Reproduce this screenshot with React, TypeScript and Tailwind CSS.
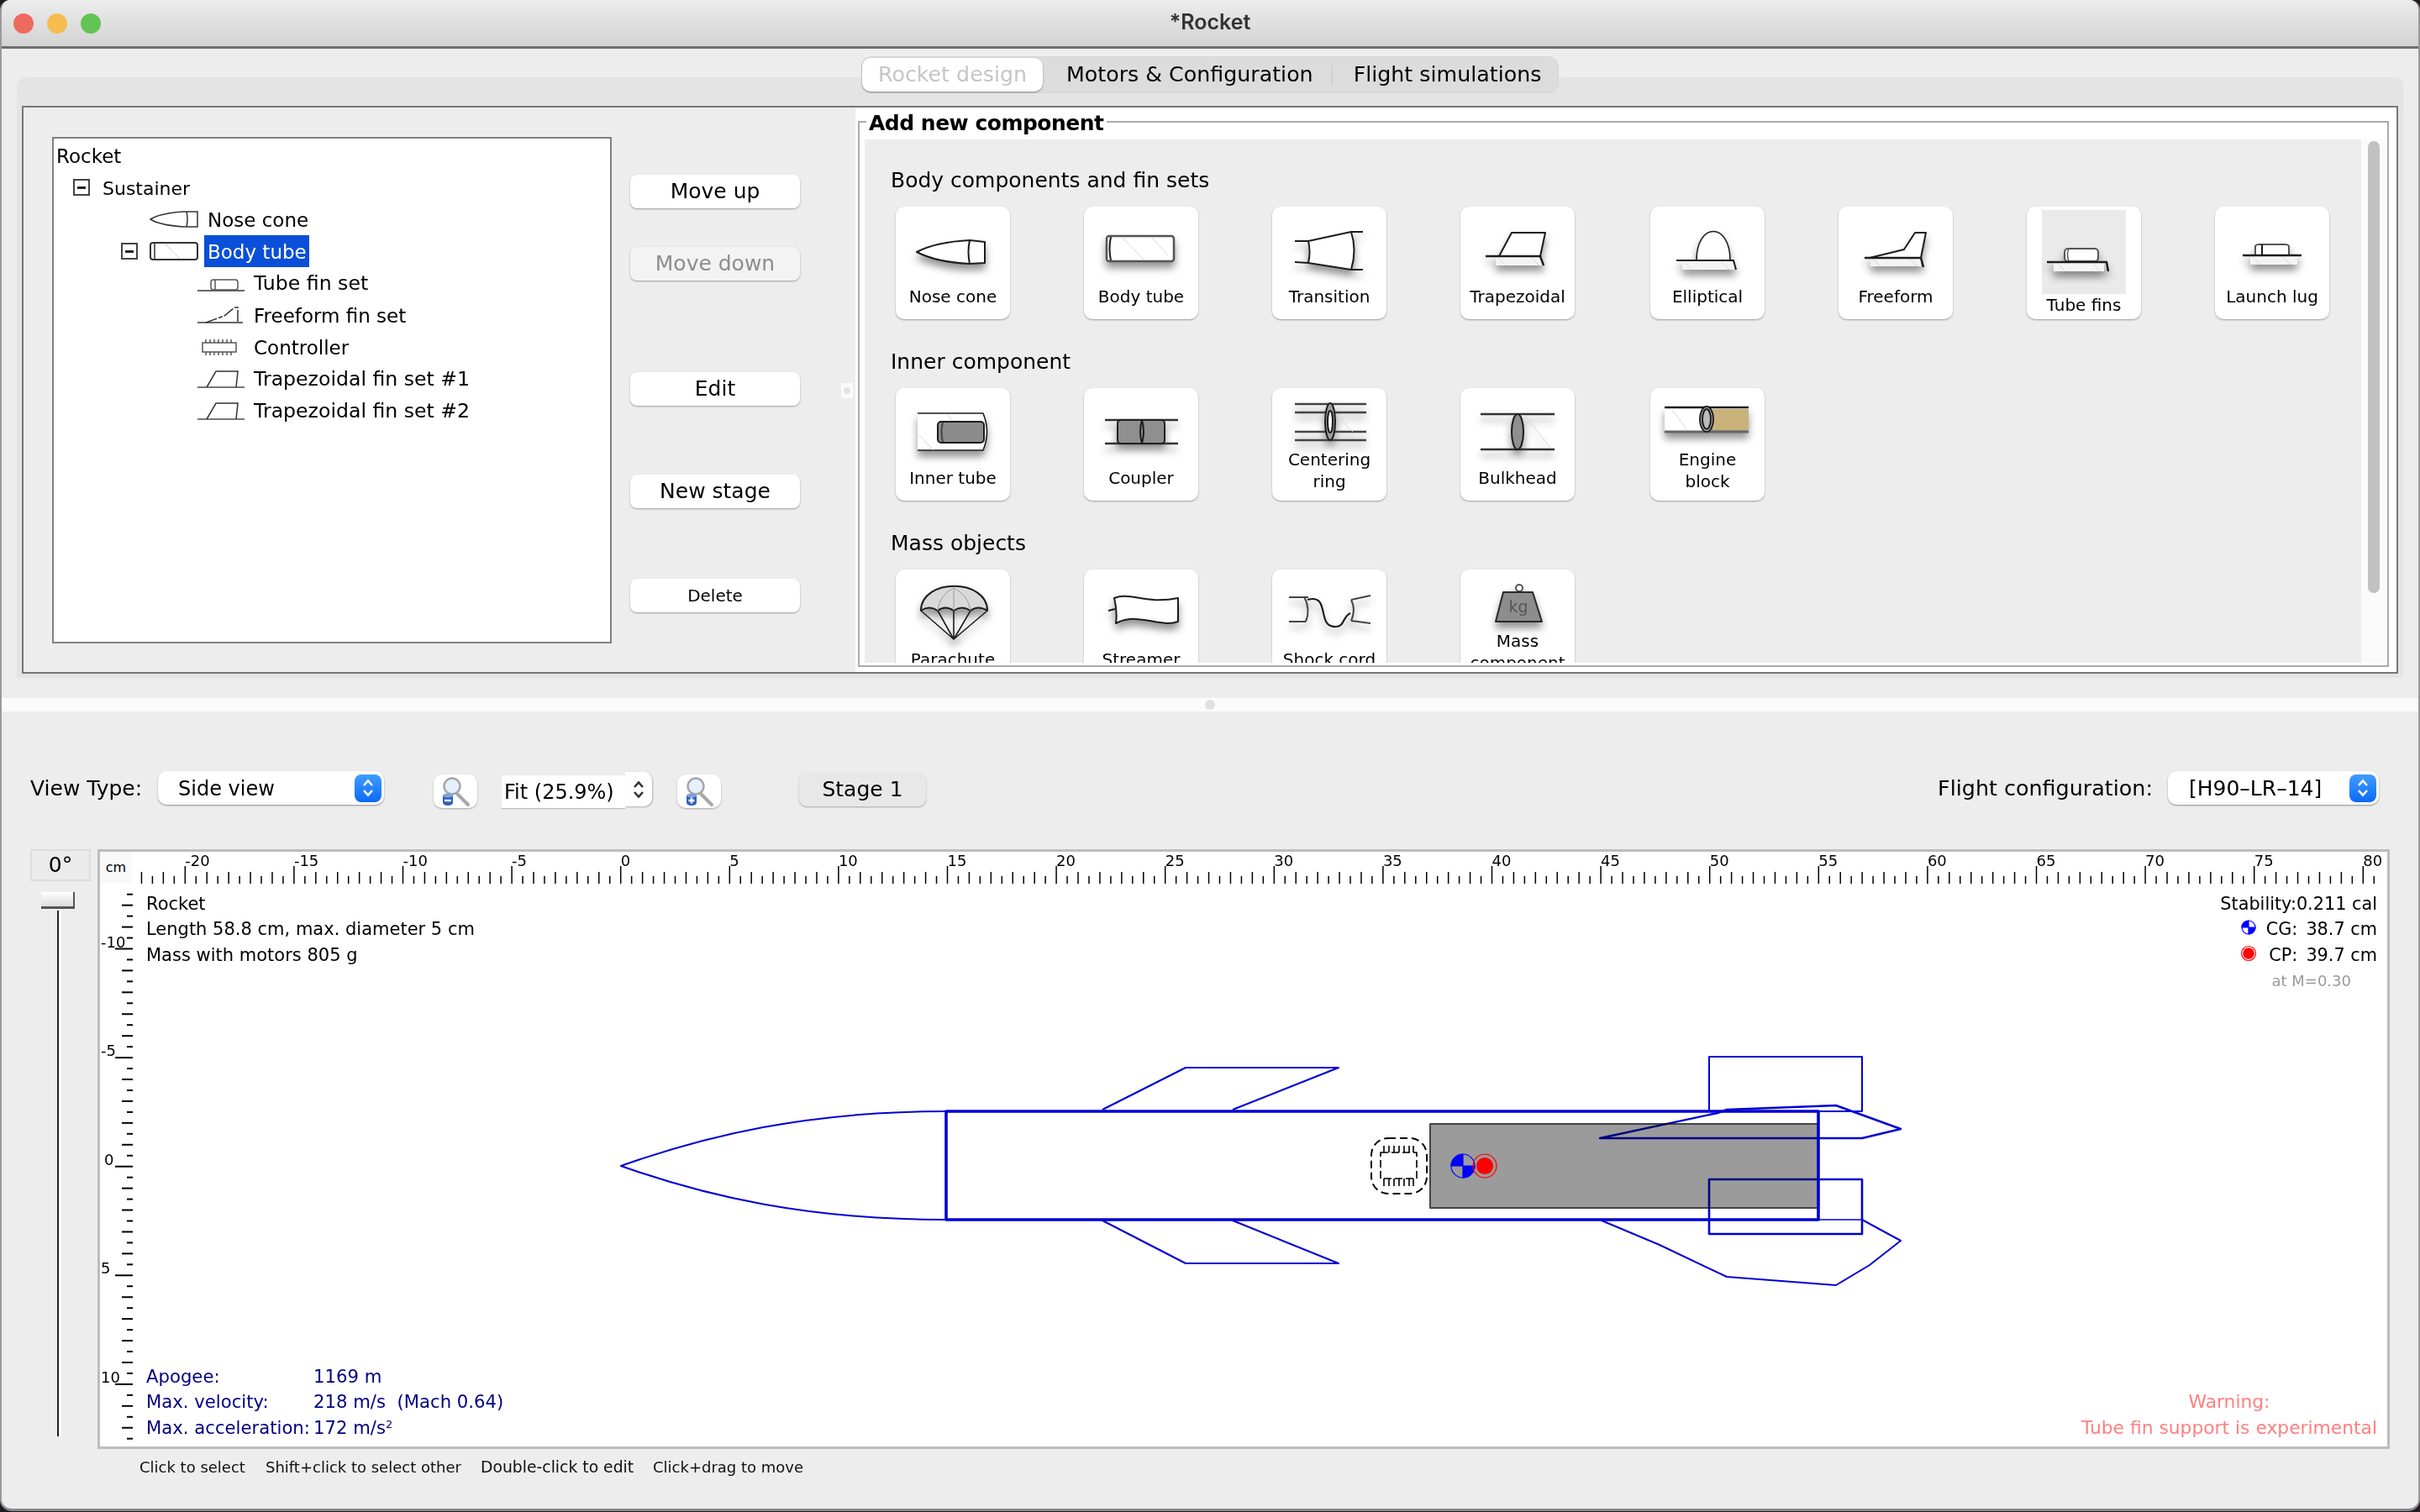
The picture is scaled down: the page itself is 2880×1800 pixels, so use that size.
import type { ReactNode } from "react";

const OUTLINE = "#1c1c1c";

// soft drop shadow under the palette drawings
function Art({ h = 92, children }: { h?: number; children: ReactNode }) {
  return (
    <svg width={136} height={h} viewBox={`0 0 136 ${h}`} className="shrink-0 [filter:drop-shadow(0_7px_5px_rgba(0,0,0,0.42))]">
      <g fill="none" stroke={OUTLINE} strokeWidth={2} strokeLinejoin="round">
        {children}
      </g>
    </svg>
  );
}

const Diagonal = ({ d }: { d: string }) => <path d={d} stroke="#d8d8d8" strokeWidth={1} />;

const icons: Record<string, ReactNode> = {
  nose: (
    <Art>
      <path d="M25 54 Q48 42 88 40 L106 42 V67 L88 68 Q48 66 25 54 Z" fill="#fff" />
      <path d="M88 40 Q85 54 88 68" />
    </Art>
  ),
  body: (
    <Art>
      <rect x={27} y={35} width={80} height={30} rx={3} fill="#fff" stroke="#555" strokeWidth={2.5} />
      <path d="M32 36 Q29 50 32 64" />
      <Diagonal d="M45 36 L72 64 M80 36 L100 58" />
    </Art>
  ),
  transition: (
    <Art>
      <path d="M43 41 L94 30 Q101 52 94 75 L43 67 Z" fill="#fff" stroke="none" />
      <path d="M27 41 H43 L94 30 H108 M27 66 L43 67 L94 75 H108" />
      <path d="M43 41 Q46 54 43 67 M94 30 Q101 52 94 75" />
    </Art>
  ),
  trapezoidal: (
    <Art>
      <path d="M46 59 L61 31 H101 L95 59 Z" fill="#fff" />
      <rect x={42} y={60} width={56} height={10} fill="#f4f4f4" stroke="none" />
      <Diagonal d="M44 60 L54 70 M84 60 L94 70" />
      <path d="M30 59 H95 L99 70" strokeWidth={2.5} />
    </Art>
  ),
  elliptical: (
    <Art>
      <path d="M55 64 C55 18 95 18 95 64 Z" fill="#fff" strokeWidth={1.6} />
      <rect x={38} y={65} width={62} height={10} fill="#f4f4f4" stroke="none" />
      <Diagonal d="M40 65 L50 75 M84 65 L94 75" />
      <path d="M31 64 H99 L102 75" strokeWidth={2} />
    </Art>
  ),
  freeform: (
    <Art>
      <path d="M37 61 L78 51 L91 31 H104 L98 61 Z" fill="#fff" />
      <rect x={38} y={62} width={60} height={9} fill="#f4f4f4" stroke="none" />
      <Diagonal d="M40 62 L50 71 M84 62 L94 71" />
      <path d="M31 61 H98 L101 72" strokeWidth={2.5} />
    </Art>
  ),
  tubefins: (
    <div className="relative mt-[4px] h-[100px] w-[100px] shrink-0 bg-[#ebeaea]">
      <svg width={100} height={100} viewBox="18 4 100 100" className="[filter:drop-shadow(0_7px_5px_rgba(0,0,0,0.42))]">
        <g fill="none" stroke={OUTLINE} strokeWidth={2} strokeLinejoin="round">
          <rect x={45} y={50} width={40} height={15} rx={4} fill="#fff" stroke="#555" />
          <path d="M50 50 Q47 57 50 65" stroke="#555" strokeWidth={1.4} />
          <rect x={32} y={67} width={60} height={10} fill="#f4f4f4" stroke="none" />
          <Diagonal d="M36 67 L46 77 M78 67 L88 77" />
          <path d="M24 66 H95 L97 77" strokeWidth={2.5} />
        </g>
      </svg>
    </div>
  ),
  lug: (
    <Art>
      <path d="M48 58 V47 Q49 45 52 45 H84 Q87 45 88 47 V58" fill="#fff" stroke="#555" />
      <path d="M56 45 V58" />
      <rect x={42} y={59} width={56} height={10} fill="#f4f4f4" stroke="none" />
      <Diagonal d="M44 59 L54 69 M80 59 L90 69" />
      <path d="M33 58 H103" strokeWidth={2.5} />
    </Art>
  ),
  inner: (
    <Art>
      <path d="M26 30 H104 Q113 52 104 74 H26" fill="#fff" strokeWidth={1.6} />
      <Diagonal d="M60 31 L90 60 M27 55 L45 74" />
      <rect x={50} y={40} width={55} height={25} rx={4} fill="#8b8b8b" />
      <path d="M56 41 Q53 52 56 64" stroke="#444" />
    </Art>
  ),
  coupler: (
    <Art>
      <path d="M25 38 H112 M25 66 H112" stroke="#333" strokeWidth={2.5} />
      <rect x={40} y={38} width={56} height={28} rx={4} fill="#8f8f8f" stroke="#222" />
      <path d="M69 38 Q65 52 69 66 M69 38 Q73 52 69 66" />
    </Art>
  ),
  ring: (
    <Art h={72}>
      <path d="M27 19 H112 M27 29 H112 M27 52 H112 M27 62 H112" stroke="#444" strokeWidth={2.5} />
      <Diagonal d="M74 30 L96 52" />
      <ellipse cx={69} cy={40} rx={6} ry={22} fill="#9c9c9c" />
      <ellipse cx={69} cy={40} rx={3} ry={13} fill="#fff" />
    </Art>
  ),
  bulkhead: (
    <Art>
      <path d="M24 31 H112 M24 73 H112" stroke="#333" strokeWidth={2.5} />
      <Diagonal d="M76 32 L108 72" />
      <ellipse cx={68} cy={52} rx={7} ry={21} fill="#8f8f8f" />
    </Art>
  ),
  engine: (
    <Art h={72}>
      <rect x={74} y={25} width={43} height={25} fill="#c9b27a" stroke="none" />
      <rect x={17} y={24} width={55} height={27} fill="#fff" stroke="none" />
      <path d="M17 23 H117" strokeWidth={2.5} />
      <path d="M17 52 H117" stroke="#666" strokeWidth={3} />
      <Diagonal d="M26 26 L44 50" />
      <ellipse cx={67} cy={37} rx={8} ry={15} fill="#bbb" />
      <ellipse cx={67} cy={37} rx={5} ry={12} />
    </Art>
  ),
  parachute: (
    <Art>
      <path d="M30 49 C30 10 109 10 109 49 Q98 42 89 49 Q79 42 69 49 Q59 42 50 49 Q40 42 30 49 Z" fill="#d9d9d9" />
      <path d="M30 49 L69 83 L109 49 M50 49 L69 83 L89 49 M69 49 V83" strokeWidth={1.6} />
      <path d="M50 49 Q52 30 69 22 Q86 30 89 49 M69 22 V49" stroke="#999" strokeWidth={1} />
    </Art>
  ),
  streamer: (
    <Art>
      <path d="M36 34 C55 26 72 42 112 34 V62 C90 70 66 50 38 64 Q40 50 36 34 Z" fill="#fff" />
      <path d="M29 49 L37 47" />
    </Art>
  ),
  shock: (
    <Art>
      <path d="M20 33 H36 L43 33 M20 62 H40" stroke="#444" />
      <path d="M38 32 Q46 48 40 62" stroke="#444" />
      <path d="M42 36 C70 28 52 70 76 68 C86 68 84 56 93 52" strokeWidth={2.2} />
      <path d="M94 36 L117 31 M94 61 L117 64 M94 36 Q100 48 94 61" stroke="#444" />
    </Art>
  ),
  mass: (
    <Art h={72}>
      <circle cx={70} cy={22} r={4} fill="#fff" stroke="#555" />
      <path d="M51 27 H86 L97 62 H42 Z" fill="#8d8d8d" stroke="#2a2a2a" />
      <text x={69} y={51} textAnchor="middle" fontSize={19} fill="#555" stroke="none">kg</text>
    </Art>
  ),
};

const palette = [
  {
    title: "Body components and fin sets",
    items: [
      ["Nose cone", "nose"],
      ["Body tube", "body"],
      ["Transition", "transition"],
      ["Trapezoidal", "trapezoidal"],
      ["Elliptical", "elliptical"],
      ["Freeform", "freeform"],
      ["Tube fins", "tubefins"],
      ["Launch lug", "lug"],
    ],
  },
  {
    title: "Inner component",
    items: [
      ["Inner tube", "inner"],
      ["Coupler", "coupler"],
      ["Centering ring", "ring"],
      ["Bulkhead", "bulkhead"],
      ["Engine block", "engine"],
    ],
  },
  {
    title: "Mass objects",
    items: [
      ["Parachute", "parachute"],
      ["Streamer", "streamer"],
      ["Shock cord", "shock"],
      ["Mass component", "mass"],
    ],
  },
];

function PaletteCard({ label, icon }: { label: string; icon: string }) {
  const twoLines = icon === "ring" || icon === "engine" || icon === "mass";
  const [first, second] = label.split(" ");
  return (
    <div className="flex h-[134px] w-[136px] flex-col items-center overflow-hidden rounded-[10px] bg-white shadow-[0_1px_2px_rgba(0,0,0,0.35)]">
      {icons[icon]}
      {twoLines ? (
        <div className="text-center text-[20px] leading-[26px] text-black">
          <div>{first}</div>
          <div>{second}</div>
        </div>
      ) : (
        <div className={`text-center text-[20px] leading-[26px] text-black ${icon === "tubefins" ? "" : "mt-[2px]"}`}>{label}</div>
      )}
    </div>
  );
}

// small tree icons, same shapes as the palette ones
const treeIcons: Record<string, ReactNode> = {
  nose: <path d="M1 12 Q12 5 40 3 L57 3 V21 H40 Q12 19 1 12 Z M44 3 Q46 12 44 21" />,
  body: <><rect x={1} y={2} width={56} height={20} rx={3} strokeWidth={2} /><path d="M6 3 V21" /><path d="M18 3 L36 21" stroke="#ccc" strokeWidth={1} /></>,
  tube: <><path d="M0 21 H56" /><rect x={16} y={8} width={32} height={12} rx={3} stroke="#555" /><path d="M21 8 V20" stroke="#555" /></>,
  freeform: <><path d="M0 21 H54" /><path d="M10 21 L32 13 L44 3 H48 V21" strokeDasharray="14 2 5 2" /></>,
  controller: <><rect x={6} y={7} width={40} height={11} stroke="#555" /><path d="M10 3 V7 M15 3 V7 M20 3 V7 M25 3 V7 M30 3 V7 M35 3 V7 M40 3 V7 M10 18 V22 M15 18 V22 M20 18 V22 M25 18 V22 M30 18 V22 M35 18 V22 M40 18 V22" stroke="#555" /></>,
  trap: <><path d="M0 22 H56" strokeWidth={2} stroke="#777" /><path d="M11 22 L22 3 H48 L46 22" /></>,
};

function TreeIcon({ name }: { name: string }) {
  return (
    <svg width={58} height={24} viewBox="0 0 58 24" className="shrink-0">
      <g fill="none" stroke="#333" strokeWidth={1.5}>{treeIcons[name]}</g>
    </svg>
  );
}

function Collapse() {
  return (
    <span className="flex h-[20px] w-[20px] shrink-0 items-center justify-center border-2 border-[#444] bg-white">
      <span className="h-[3px] w-[10px] bg-[#222]" />
    </span>
  );
}

function RocketTree() {
  return (
    <div className="ml-[34px] mt-[35px] h-[603px] w-[666px] border-2 border-[#808080] bg-white pt-[1px] text-[23px] text-black">
      <div className="flex h-[38px] items-center pl-[3px] pt-[2px]">Rocket</div>
      <div className="flex h-[38px] items-center pl-[23px]">
        <Collapse />
        <span className="ml-[15px] pt-[2px] text-[22px]">Sustainer</span>
      </div>
      <div className="flex h-[38px] items-center pl-[114px]">
        <TreeIcon name="nose" />
        <span className="ml-[11px] pt-[2px]">Nose cone</span>
      </div>
      <div className="flex h-[38px] items-center pl-[80px]">
        <Collapse />
        <span className="ml-[14px]"><TreeIcon name="body" /></span>
        <span className="ml-[7px] flex h-[38px] w-[125px] items-center bg-[#0a4fd8] pl-[4px] pt-[2px] text-white">Body tube</span>
      </div>
      {[
        ["tube", "Tube fin set", "text-[23.6px]"],
        ["freeform", "Freeform fin set", "text-[23px]"],
        ["controller", "Controller", "text-[23px]"],
        ["trap", "Trapezoidal fin set #1", "text-[23.6px]"],
        ["trap", "Trapezoidal fin set #2", "text-[23.6px]"],
      ].map(([icon, label, size]) => (
        <div key={label} className="flex h-[38px] items-center pl-[171px]">
          <TreeIcon name={icon} />
          <span className={`ml-[9px] pt-[2px] ${size}`}>{label}</span>
        </div>
      ))}
    </div>
  );
}

function PushButton({ label, top, small, off }: { label: string; top: number; small?: boolean; off?: boolean }) {
  return (
    <div
      style={{ marginTop: top }}
      className={`flex h-[40px] w-[202px] items-center justify-center rounded-[8px] shadow-[0_1px_2px_rgba(0,0,0,0.35)] ${off ? "bg-[#f3f3f3] text-[#8d8d8d]" : "bg-white text-black"} ${small ? "text-[20px]" : "text-[25px]"}`}
    >
      {label}
    </div>
  );
}

function Chevrons({ color = "#fff" }: { color?: string }) {
  return (
    <svg width={16} height={24} viewBox="0 0 16 24" fill="none" stroke={color} strokeWidth={2.6}>
      <path d="M3 9 L8 3.5 L13 9 M3 15 L8 20.5 L13 15" />
    </svg>
  );
}

function SelectBox({ label, width, pad, size }: { label: string; width: number; pad: number; size: string }) {
  return (
    <div style={{ width, paddingLeft: pad }} className={`flex h-[40px] items-center justify-between rounded-[10px] bg-white pr-[3px] text-black shadow-[0_1px_2px_rgba(0,0,0,0.4)] ${size}`}>
      <span className="pt-[1px]">{label}</span>
      <span className="flex h-[33px] w-[32px] items-center justify-center rounded-[8px] bg-gradient-to-b from-[#3f9cff] to-[#0a69f6]">
        <Chevrons />
      </span>
    </div>
  );
}

function ZoomButton({ plus }: { plus?: boolean }) {
  return (
    <div className="flex h-[40px] w-[52px] shrink-0 items-center justify-center rounded-[10px] bg-white shadow-[0_1px_2px_rgba(0,0,0,0.3)]">
      <svg width={52} height={40} viewBox="0 0 52 40" fill="none">
        <path d="M28 23 L41 36" stroke="#a8a8a8" strokeWidth={4} strokeLinecap="round" />
        <circle cx={22} cy={14} r={9.5} fill="#e4f0fb" stroke="#a5a5a5" strokeWidth={2.4} />
        <path d="M11 25 H23 V33 Q23 37 17 37 Q11 37 11 33 Z" fill="#2f62b8" />
        <ellipse cx={17} cy={25} rx={6} ry={2.5} fill="#7ea3dd" />
        <path d={plus ? "M13.5 31 H20.5 M17 27.5 V34.5" : "M13 31 H21"} stroke="#fff" strokeWidth={2.4} />
      </svg>
    </div>
  );
}

const X0 = 738.7;
const Y0 = 1388.7;
const CM = 25.92;

function Rulers() {
  const xTicks = [];
  for (let i = -44; i <= 161; i++) {
    const x = X0 + (i * CM) / 2;
    const top = i % 10 === 0 ? 1031 : i % 2 === 0 ? 1038 : 1043;
    xTicks.push(<line key={i} x1={x} x2={x} y1={top} y2={1052} stroke="#000" strokeWidth={1.5} />);
  }
  const xLabels = [];
  for (let c = -20; c <= 80; c += 5) {
    xLabels.push(<text key={c} x={X0 + c * CM} y={1031} fontSize={18} fill="#000">{c}</text>);
  }
  const yTicks = [];
  for (let i = -25; i <= 25; i++) {
    const y = Y0 + (i * CM) / 2;
    const left = i % 10 === 0 ? 137 : i % 2 === 0 ? 145 : 151;
    yTicks.push(<line key={i} x1={left} x2={158} y1={y} y2={y} stroke="#000" strokeWidth={2} />);
  }
  const yLabels = [-10, -5, 0, 5, 10].map((c) => (
    <text key={c} x={c === 0 ? 124 : 120} y={Y0 + c * CM - 2} fontSize={18} fill="#000">{c}</text>
  ));
  return (
    <>
      {xTicks}
      {xLabels}
      {yTicks}
      {yLabels}
    </>
  );
}

function RocketDrawing() {
  const blue = "#0000d4";
  return (
    <g fill="none" stroke={blue} strokeWidth={2} strokeLinejoin="round">
      <path d="M1126 1323 C960 1323 840 1352 739 1388 C840 1424 960 1452 1126 1452" />
      <path d="M2164 1323 H2216 M2164 1452 H2216" strokeWidth={1.5} />
      <path d="M1312 1321 L1411 1271 H1593 L1467 1321" strokeWidth={2.2} />
      <path d="M1312 1453 L1411 1504 H1593 L1467 1453" strokeWidth={2.2} />
      <rect x={2034} y={1258} width={182} height={65} />
      <rect x={2034} y={1404} width={182} height={65} strokeWidth={2.6} />
      <path d="M1904 1355 L2044 1325 L2055 1321 L2185 1316 L2262 1344 L2216 1355 Z" strokeWidth={2.4} />
      <path d="M1906 1453 L1975 1482 L2055 1520 L2185 1530 L2225 1506 L2262 1477 L2216 1452" />
      <rect x={1702} y={1338} width={462} height={100} fill="#9b9b9b" stroke="#444" strokeWidth={2} className="mix-blend-multiply" />
      <path d="M1126 1323 H2164 V1452 H1126 Z" strokeWidth={3.6} />
      <g stroke="#000" strokeWidth={1.6}>
        <rect x={1632} y={1355} width={66} height={66} rx={20} strokeWidth={2} strokeDasharray="9 5" />
        <rect x={1643} y={1372} width={43} height={31} strokeDasharray="9 4" />
        <path d="M1647 1364 V1372 M1653 1364 V1372 M1659 1364 V1372 M1665 1364 V1372 M1671 1364 V1372 M1677 1364 V1372 M1682 1364 V1372 M1647 1403 V1412 M1653 1403 V1412 M1659 1403 V1412 M1665 1403 V1412 M1671 1403 V1412 M1677 1403 V1412 M1682 1403 V1412" />
      </g>
      <CgMark cx={1741} cy={1388} r={14} />
      <CpMark cx={1767} cy={1388} r={14} ratio={0.72} />
      <CgMark cx={2676} cy={1104} r={8} />
      <CpMark cx={2676} cy={1135} r={8.5} ratio={0.8} />
    </g>
  );
}

function CgMark({ cx, cy, r }: { cx: number; cy: number; r: number }) {
  return (
    <g stroke="#0000ff" strokeWidth={1.2}>
      <circle cx={cx} cy={cy} r={r} />
      <path d={`M${cx} ${cy} V${cy - r} A${r} ${r} 0 0 0 ${cx - r} ${cy} Z M${cx} ${cy} V${cy + r} A${r} ${r} 0 0 0 ${cx + r} ${cy} Z`} fill="#0000ff" />
    </g>
  );
}

function CpMark({ cx, cy, r, ratio }: { cx: number; cy: number; r: number; ratio: number }) {
  return (
    <g stroke="#ff0000" strokeWidth={1.2}>
      <circle cx={cx} cy={cy} r={r} />
      <circle cx={cx} cy={cy} r={r * ratio} fill="#ff0000" stroke="none" />
    </g>
  );
}

function RocketFigure() {
  return (
    <div className="relative ml-[8px] h-[714px] w-[2728px] border-[3px] border-[#bdbdbd] bg-white text-[21px] text-black">
      <svg className="absolute left-[-3px] top-[-3px]" width={2728} height={714} viewBox="116 1011 2728 714">
        <Rulers />
        <RocketDrawing />
      </svg>
      <div className="absolute left-0 top-0 flex h-[37px] w-[38px] items-center justify-center bg-[#f8f8f8] text-[16px]">cm</div>
      <div className="absolute left-[55px] top-[47px] leading-[30.5px]">
        <div>Rocket</div>
        <div className="-mt-px mb-px">Length 58.8 cm, max. diameter 5 cm</div>
        <div>Mass with motors 805 g</div>
      </div>
      <div className="absolute right-[12px] top-[47px] text-right text-[20.8px] leading-[30.5px]">
        <div>Stability:0.211 cal</div>
        <div className="-mt-px mb-px"><span className="mr-[10px]">CG:</span>38.7 cm</div>
        <div><span className="mr-[10px]">CP:</span>39.7 cm</div>
        <div className="mr-[31px] text-[18px] text-[#999]">at M=0.30</div>
      </div>
      <div className="absolute bottom-[7px] left-[55px] grid grid-cols-[199px_auto] text-[21.2px] leading-[30.5px] text-[#000080]">
        <div>Apogee:</div>
        <div>1169 m</div>
        <div>Max. velocity:</div>
        <div>218 m/s&nbsp; (Mach 0.64)</div>
        <div>Max. acceleration:</div>
        <div>172 m/s<sup className="text-[13px]">2</sup></div>
      </div>
      <div className="absolute bottom-[7px] right-[12px] text-center text-[21.8px] leading-[30.5px] text-[#ff8080]">
        <div>Warning:</div>
        <div>Tube fin support is experimental</div>
      </div>
    </div>
  );
}

function AngleSlider() {
  return (
    <div className="flex w-[72px] flex-col">
      <div className="flex h-[38px] items-center justify-center border-2 border-[#dcdcdc] bg-[#ebebeb] text-[25px] text-black">0°</div>
      <div className="ml-[13px] mt-[13px] h-[20px] w-[40px] border-b-[3px] border-r-2 border-b-[#555] border-r-[#555] bg-gradient-to-b from-white to-[#dcdcdc]" />
      <div className="ml-[32px] mt-[2px] h-[626px] w-[5px] border-l-2 border-l-[#222] bg-white" />
    </div>
  );
}

export default function App() {
  return (
    <div className="h-[1800px] w-[2880px] overflow-hidden bg-[#221c20] font-['DejaVu_Sans',sans-serif]">
      <div className="flex h-[1799px] flex-col overflow-hidden rounded-b-[14px] rounded-t-[12px] border-x-2 border-b-[3px] border-x-[#9a9a9a] border-b-[#8a8a8a] bg-[#ededed]">
        {/* title bar */}
        <div className="relative flex h-[58px] shrink-0 items-center justify-center border-b-[3px] border-b-[#6e6e6e] bg-gradient-to-b from-[#ececec] to-[#d3d3d3] font-['Inter',sans-serif] text-[25px] font-semibold text-[#333]">
          <div className="absolute left-[14px] top-[16px] flex gap-[16px]">
            <span className="h-[24px] w-[24px] rounded-full bg-[#ee6a5f]" />
            <span className="h-[24px] w-[24px] rounded-full bg-[#f5bd4f]" />
            <span className="h-[24px] w-[24px] rounded-full bg-[#61c454]" />
          </div>
          <span className="-mt-px">*Rocket</span>
        </div>

        {/* upper pane with tabs */}
        <div className="mx-[18px] mt-[34px] flex h-[715px] shrink-0 flex-col rounded-t-[10px] bg-[#e4e4e4] px-[6px]">
          <div className="-mt-[25px] flex h-[44px] w-[830px] items-center self-center rounded-[12px] border border-[#d6d6d6] bg-[#dcdcdc] text-[25.3px] text-black">
            <div className="flex h-[40px] w-[215px] items-center justify-center rounded-[10px] bg-white text-[#c6c6c6] shadow-[0_1px_2px_rgba(0,0,0,0.4)]">Rocket design</div>
            <span className="ml-[28px]">Motors &amp; Configuration</span>
            <span className="ml-[22px] h-[24px] w-px bg-[#c8c8c8]" />
            <span className="ml-[25px]">Flight simulations</span>
          </div>
          <div className="mt-[15px] flex h-[676px] border-2 border-[#777] bg-[#ededed]">
            <RocketTree />
            <div className="ml-[22px] flex flex-col">
              <PushButton label="Move up" top={80} />
              <PushButton label="Move down" top={46} off />
              <PushButton label="Edit" top={109} />
              <PushButton label="New stage" top={82} />
              <PushButton label="Delete" top={84} small />
            </div>
            <div className="ml-[49px] mt-[328px] flex h-[18px] w-[14px] items-center justify-center bg-[#fafafa]">
              <span className="h-[8px] w-[8px] rounded-full bg-[#e2e2e2]" />
            </div>
            <div className="ml-[3px] flex min-h-0 flex-1 flex-col bg-white px-[3px] pb-[6px] pr-[9px] pt-[16px]">
              <div className="relative flex min-h-0 flex-1 border-2 border-[#aaa] pb-[3px] pl-[6px] pt-[20px]">
                <span className="absolute -top-[12px] left-[8px] bg-white px-[3px] text-[25px] font-bold leading-[26px] tracking-[-0.5px] text-black">Add new component</span>
                <div className="min-h-0 flex-1 overflow-hidden bg-[#ededed] pl-[31px] pt-[34px]">
                  {palette.map((group) => (
                    <div key={group.title} className="mb-[36px]">
                      <div className="h-[30px] text-[25px] leading-[30px] text-black">{group.title}</div>
                      <div className="ml-[6px] mt-[16px] grid grid-cols-[224px_224px_224px_226px_224px_224px_224px_136px]">
                        {group.items.map(([label, icon]) => (
                          <PaletteCard key={label} label={label} icon={icon} />
                        ))}
                      </div>
                    </div>
                  ))}
                </div>
                <div className="w-[31px] shrink-0 bg-[#fafafa] pl-[8px] pt-[2px]">
                  <div className="h-[538px] w-[14px] rounded-full bg-[#c1c1c1]" />
                </div>
              </div>
            </div>
          </div>
        </div>

        {/* horizontal splitter */}
        <div className="mt-[24px] flex h-[16px] shrink-0 items-center justify-center bg-[#fbfbfb]">
          <span className="h-[12px] w-[12px] rounded-full bg-[#e0e0e0]" />
        </div>

        {/* view toolbar */}
        <div className="ml-[34px] mt-[71px] flex h-[44px] shrink-0 items-start text-black">
          <span className="flex h-[40px] w-[152px] items-center pt-[1px] text-[25px]">View Type:</span>
          <SelectBox label="Side view" width={269} pad={24} size="text-[24px]" />
          <div className="ml-[59px] mt-[4px]"><ZoomButton /></div>
          <div className="ml-[29px] mt-[5px] flex h-[39px] w-[147px] items-center bg-white pl-[3px] text-[24px] shadow-[0_1px_1px_rgba(0,0,0,0.2)]">Fit (25.9%)</div>
          <div className="mt-[1px] flex h-[41px] w-[32px] items-center justify-center rounded-r-[10px] bg-white shadow-[1px_1px_2px_rgba(0,0,0,0.25)]">
            <Chevrons color="#333" />
          </div>
          <div className="ml-[30px] mt-[4px]"><ZoomButton plus /></div>
          <div className="ml-[93px] mt-[2px] flex h-[40px] w-[151px] items-center justify-center rounded-[9px] bg-[#e8e8e8] text-[25px] shadow-[0_1px_2px_rgba(0,0,0,0.3)]">Stage 1</div>
          <div className="flex-1" />
          <span className="mr-[18px] flex h-[40px] items-center pt-[1px] text-[25.4px]">Flight configuration:</span>
          <SelectBox label="[H90–LR–14]" width={251} pad={25} size="text-[25px]" />
          <div className="w-[47px]" />
        </div>

        {/* figure */}
        <div className="ml-[34px] mt-[49px] flex shrink-0">
          <AngleSlider />
          <RocketFigure />
        </div>

        <div className="mt-[8px] flex pl-[164px] text-[18px] text-[#111]">
          <span className="w-[150px]">Click to select</span>
          <span className="w-[256px]">Shift+click to select other</span>
          <span className="w-[205px] text-[18.8px]">Double-click to edit</span>
          <span>Click+drag to move</span>
        </div>
      </div>
    </div>
  );
}
